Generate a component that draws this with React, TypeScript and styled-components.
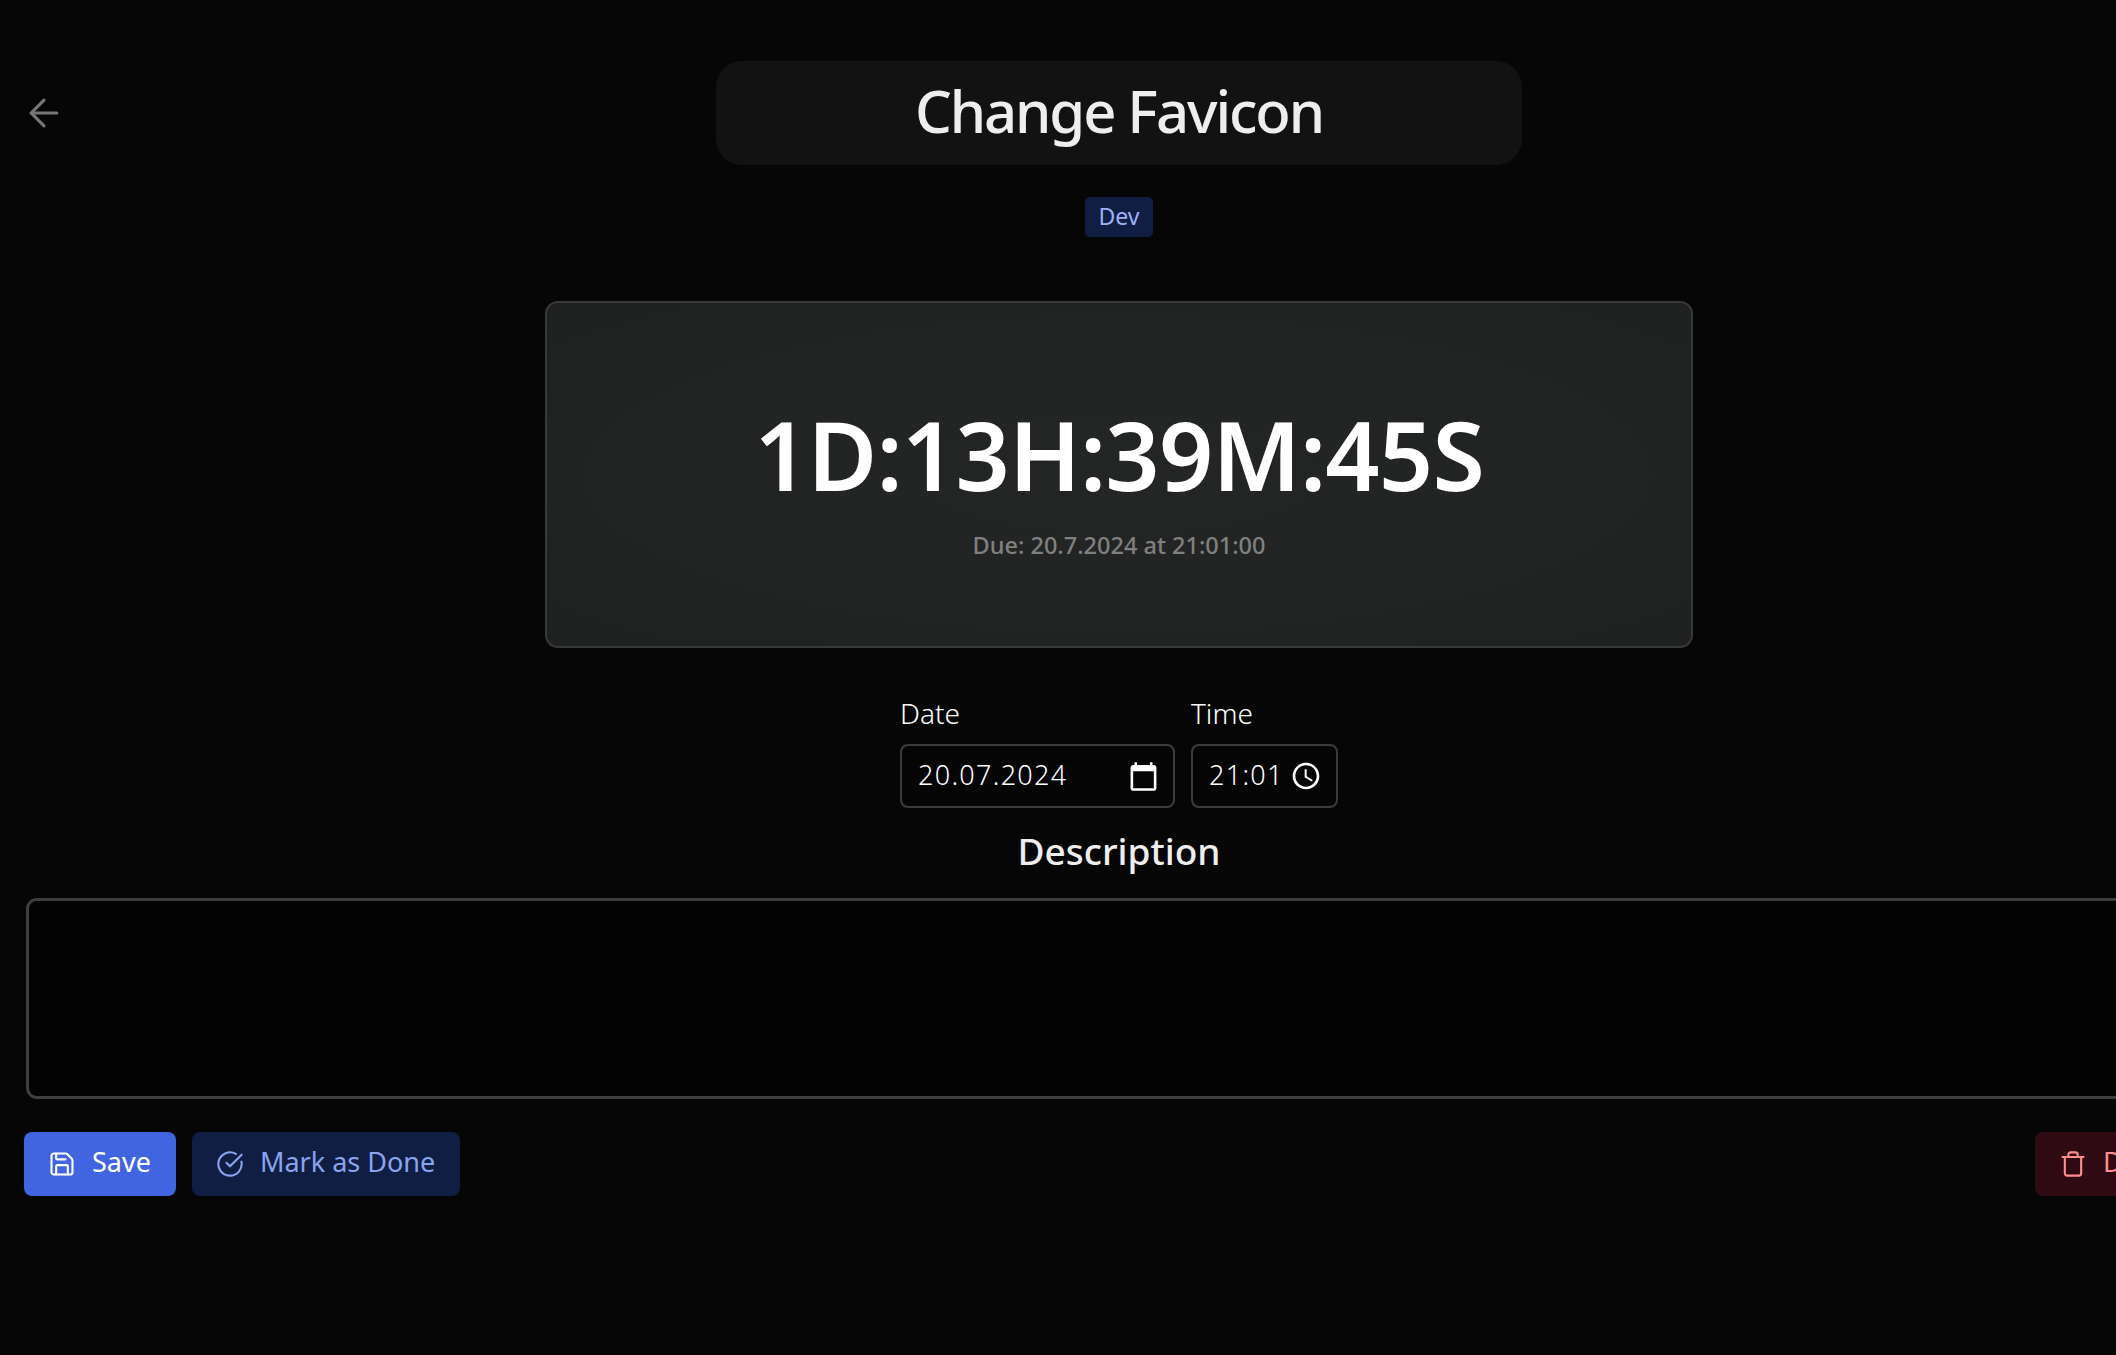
import { ArrowLeft, CircleCheckBig, Save, Trash } from "lucide-react";
import styled, { createGlobalStyle } from "styled-components";

const GlobalStyle = createGlobalStyle`
  html, body {
    margin: 0;
    overflow: hidden;
    background: #060606;
  }
  * {
    box-sizing: border-box;
  }
`;

const Page = styled.div`
  width: 2238px;
  height: 1355px;
  padding: 61px 24px 0;
  background: #060606;
  color: #eee;
  font-family: "Noto Sans", "Open Sans", sans-serif;
`;

const Header = styled.header`
  display: grid;
  grid-template-columns: 1fr 806px 1fr;
  align-items: center;
`;

const BackButton = styled.button`
  display: flex;
  width: 44px;
  height: 44px;
  margin-left: -2px;
  padding: 0;
  border: 0;
  background: none;
  color: #777;
`;

const Title = styled.h1`
  margin: 0;
  height: 104px;
  border-radius: 26px;
  background: #121212;
  font-size: 58px;
  font-weight: 500;
  line-height: 100px;
  text-align: center;
  letter-spacing: -2.1px;
`;

const TagRow = styled.div`
  display: flex;
  justify-content: center;
  margin-top: 32px;
`;

const Tag = styled.span`
  width: 68px;
  height: 40px;
  border-radius: 5px;
  background: #101e43;
  color: #9db1f5;
  font-size: 23px;
  line-height: 38px;
  text-align: center;
`;

const TimerCard = styled.section`
  display: flex;
  flex-direction: column;
  align-items: center;
  justify-content: center;
  width: 1148px;
  height: 347px;
  margin: 64px auto 0;
  padding-top: 6px;
  border: 2px solid #37393b;
  border-radius: 13px;
  background: radial-gradient(ellipse at center, #242625 0%, #222423 60%, #1f2120 100%);
`;

const Countdown = styled.div`
  color: #fff;
  font-size: 95px;
  font-weight: 600;
  line-height: 120px;
  letter-spacing: -0.8px;
`;

const DueDate = styled.div`
  margin-top: 15px;
  color: #808080;
  font-size: 23.5px;
  font-weight: 500;
  line-height: 32px;
`;

const FieldRow = styled.div`
  display: flex;
  justify-content: center;
  gap: 16px;
  margin-top: 47px;
`;

const Field = styled.div`
  display: flex;
  flex-direction: column;
  gap: 9px;
`;

const FieldLabel = styled.label`
  height: 40px;
  color: #fff;
  font-size: 28px;
  font-weight: 300;
  line-height: 36px;
`;

const FieldBox = styled.div<{ $width: number }>`
  display: flex;
  align-items: center;
  justify-content: space-between;
  width: ${(p) => p.$width}px;
  height: 64px;
  padding: 0 14px 0 16px;
  border: 2px solid #393c3f;
  border-radius: 8px;
  background: #050505;
  color: #fff;
  font-size: 27px;
  font-weight: 300;
  letter-spacing: 1.3px;
`;

const FieldValue = styled.span`
  padding-bottom: 4px;
`;

const SectionTitle = styled.h2`
  margin: 15px 0 19px;
  font-size: 37px;
  font-weight: 500;
  line-height: 56px;
  text-align: center;
`;

const Notes = styled.textarea`
  display: block;
  width: calc(100% - 4px);
  height: 201px;
  margin: 0 2px;
  padding: 12px 16px;
  border: 3px solid #3c3e41;
  border-radius: 11px;
  background: #030303;
  resize: none;
  outline: none;
`;

const Actions = styled.div`
  display: flex;
  justify-content: space-between;
  margin: 33px 4px 0 0;
`;

const ActionGroup = styled.div`
  display: flex;
  gap: 16px;
`;

const tones = {
  primary: { bg: "#4165e0", fg: "#fff" },
  soft: { bg: "#101e43", fg: "#8ba4ef" },
  danger: { bg: "#300a12", fg: "#ff8e8e" },
};

const ActionButton = styled.button<{ $tone: keyof typeof tones }>`
  display: flex;
  align-items: center;
  gap: 16px;
  height: 64px;
  padding: 0 25px 0 24px;
  border: 0;
  border-radius: 8px;
  background: ${(p) => tones[p.$tone].bg};
  color: ${(p) => tones[p.$tone].fg};
  font-family: inherit;
  font-size: 27px;
  font-weight: 400;
`;

const ButtonLabel = styled.span`
  padding-bottom: 5px;
`;

const CalendarIcon = () => (
  <svg width="31" height="31" viewBox="0 0 24 24" fill="#fff">
    <path d="M20 3h-1V1h-2v2H7V1H5v2H4c-1.1 0-2 .9-2 2v16c0 1.1.9 2 2 2h16c1.1 0 2-.9 2-2V5c0-1.1-.9-2-2-2zm0 18H4V8h16v13z" />
  </svg>
);

const ClockIcon = () => (
  <svg width="32" height="32" viewBox="0 0 24 24" fill="#fff">
    <path d="M11.99 2C6.47 2 2 6.48 2 12s4.47 10 9.99 10C17.52 22 22 17.52 22 12S17.52 2 11.99 2zM12 20c-4.42 0-8-3.58-8-8s3.58-8 8-8 8 3.58 8 8-3.58 8-8 8z" />
    <path d="M12.5 7H11v6l5.25 3.15.75-1.23-4.5-2.67z" />
  </svg>
);

const App = () => {
  return (
    <Page>
      <GlobalStyle />
      <Header>
        <BackButton aria-label="Back">
          <ArrowLeft size={44} strokeWidth={1.7} />
        </BackButton>
        <Title>Change Favicon</Title>
      </Header>
      <TagRow>
        <Tag>Dev</Tag>
      </TagRow>
      <TimerCard>
        <Countdown>1D:13H:39M:45S</Countdown>
        <DueDate>Due: 20.7.2024 at 21:01:00</DueDate>
      </TimerCard>
      <FieldRow>
        <Field>
          <FieldLabel>Date</FieldLabel>
          <FieldBox $width={275}>
            <FieldValue>20.07.2024</FieldValue>
            <CalendarIcon />
          </FieldBox>
        </Field>
        <Field>
          <FieldLabel>Time</FieldLabel>
          <FieldBox $width={147}>
            <FieldValue>21:01</FieldValue>
            <ClockIcon />
          </FieldBox>
        </Field>
      </FieldRow>
      <SectionTitle>Description</SectionTitle>
      <Notes readOnly />
      <Actions>
        <ActionGroup>
          <ActionButton $tone="primary">
            <Save size={28} strokeWidth={1.8} />
            <ButtonLabel>Save</ButtonLabel>
          </ActionButton>
          <ActionButton $tone="soft">
            <CircleCheckBig size={28} strokeWidth={1.8} />
            <ButtonLabel>Mark as Done</ButtonLabel>
          </ActionButton>
        </ActionGroup>
        <ActionButton $tone="danger">
          <Trash size={28} strokeWidth={1.8} />
          <ButtonLabel>Delete</ButtonLabel>
        </ActionButton>
      </Actions>
    </Page>
  );
};

export default App;
